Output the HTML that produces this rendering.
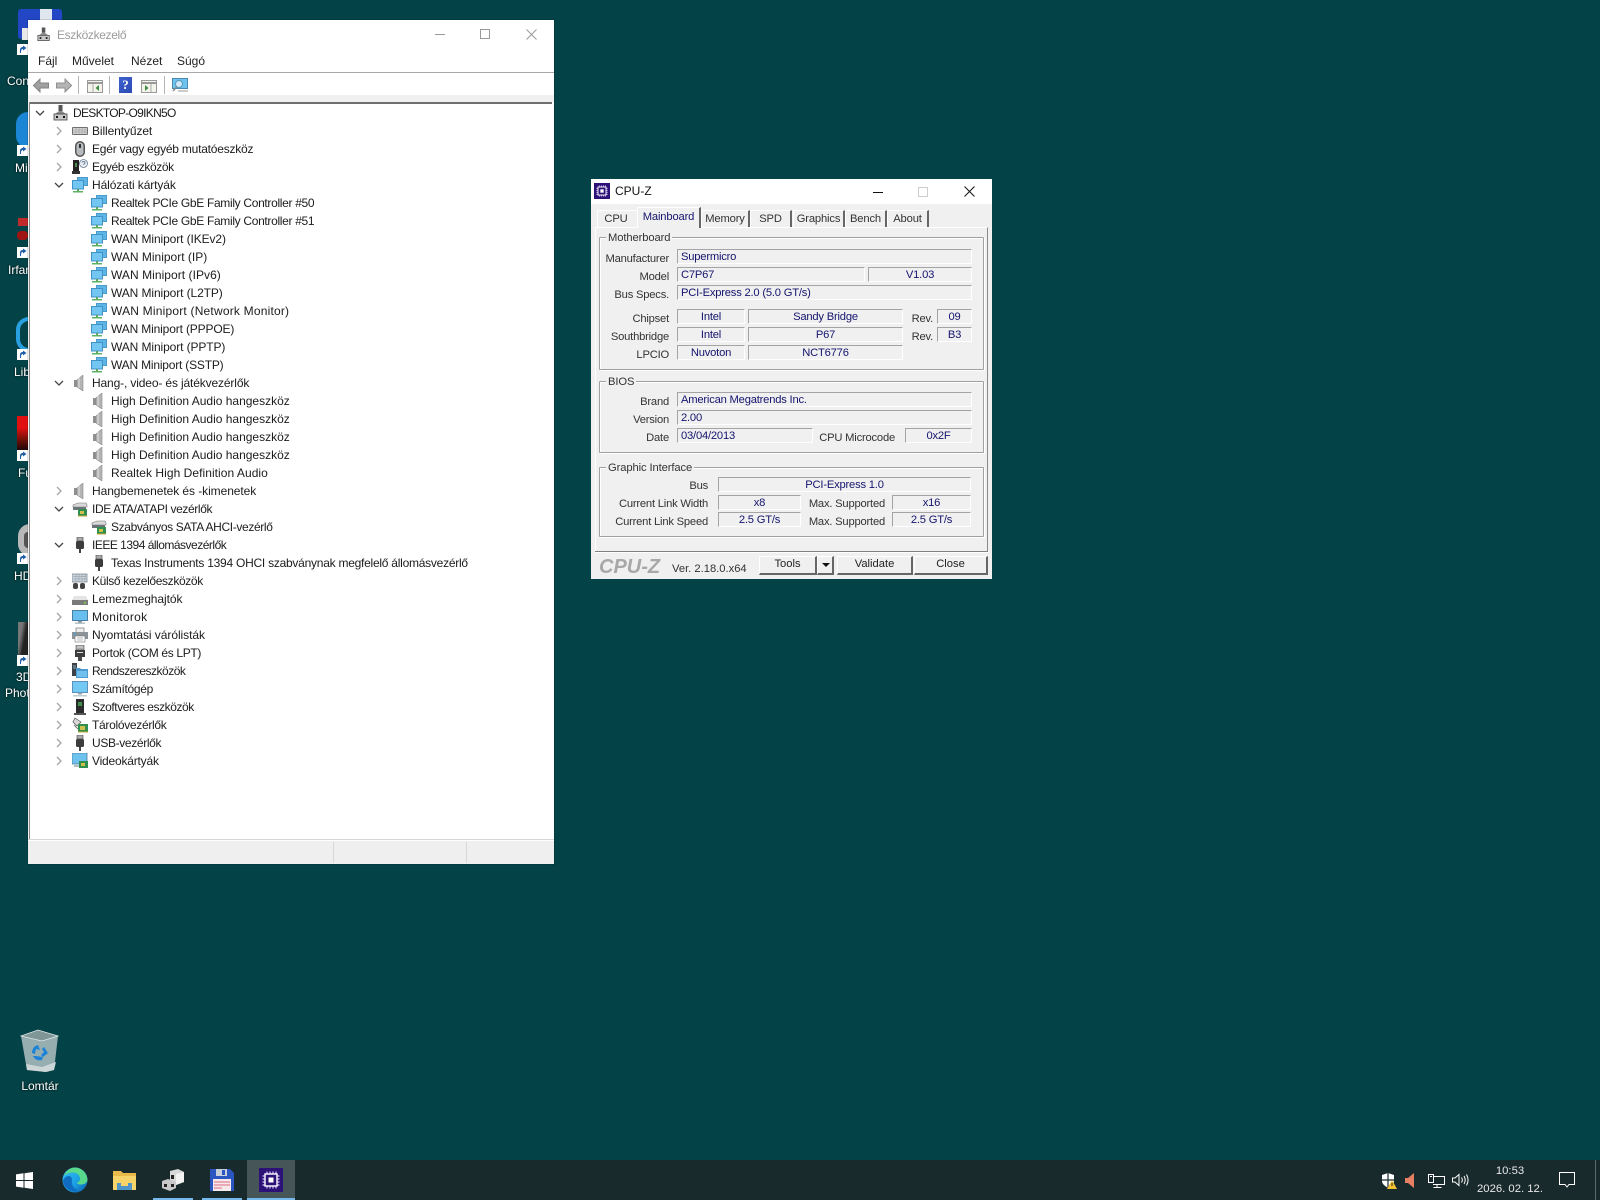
<!DOCTYPE html>
<html lang="hu"><head><meta charset="utf-8"><title>Desktop</title>
<style>
html,body{margin:0;padding:0}
body{position:relative;width:1600px;height:1200px;overflow:hidden;background:#034246;font-family:"Liberation Sans",sans-serif;font-size:12px;color:#222}
div,span,svg{position:absolute}
svg{display:block}
.t{white-space:nowrap}
.r{white-space:nowrap;height:18px;line-height:18px;font-size:12px;color:#1c1c1c}
.d{color:#fff;font-size:12px;white-space:nowrap;text-shadow:0 0 2px #000}
.f{background:#f0f0f0;border-top:1px solid #a4a4a4;border-left:1px solid #a4a4a4;border-bottom:1px solid #fff;border-right:1px solid #fff;color:#14146e;font-size:11.2px;letter-spacing:-.2px;line-height:15px;text-align:center;white-space:nowrap;box-sizing:border-box;height:15px}
.fl{text-align:left;padding-left:3px}
.l{white-space:nowrap;font-size:11.2px;letter-spacing:-.2px;line-height:16px;height:16px;color:#333;margin-top:1px}
.g{border:1px solid #a0a0a0;box-shadow:1px 1px 0 #fff,inset 1px 1px 0 #fff;box-sizing:border-box;left:599px;width:385px;border-radius:1px}
.gl{left:606px;background:#f0f0f0;padding:0 2px;font-size:11.2px;letter-spacing:-.1px;line-height:14px;height:14px;color:#333;white-space:nowrap;margin-top:1px}
.tab{box-sizing:border-box;top:210px;height:17px;border-top:1px solid #fff;border-left:1px solid #fff;border-right:2px solid #666;font-size:11.2px;letter-spacing:-.15px;line-height:17px;text-align:center;color:#333;background:#f0f0f0}
.b{box-sizing:border-box;height:19px;top:556px;background:#f0f0f0;border-top:1px solid #fff;border-left:1px solid #fff;border-right:2px solid #666;border-bottom:2px solid #666;font-size:11.2px;line-height:15px;text-align:center;color:#222}
</style></head><body>
<svg width="0" height="0" style="left:0;top:0">
<defs>
<symbol id="net" viewBox="0 0 16 16"><rect x="5.5" y=".5" width="10" height="8" fill="#5db5e6" stroke="#4a9acb"/><rect x=".5" y="3.500" width="11" height="8.500" fill="#74c6f2" stroke="#3f93c6"/><rect x="5" y="12" width="2" height="2" fill="#5aa85a"/><rect x="1" y="14" width="10" height="1.500" fill="#5cb064"/></symbol>
<symbol id="spk" viewBox="0 0 16 16"><path d="M2 5h3v7H2z" fill="#8f8f8f"/><path d="M5 5l6-5v16l-6-4z" fill="#b4b4b4" stroke="#8a8a8a" stroke-width=".6"/><path d="M7 3v10" stroke="#e2e2e2"/></symbol>
<symbol id="kbd" viewBox="0 0 16 16"><rect x="0" y="4" width="16" height="8" rx="1" fill="#6f6f6f"/><rect x="1" y="5" width="14" height="6" fill="#d4d4d4"/><path d="M1 7h14M1 9h14M4 5v6M7 5v6M10 5v6M13 5v6" stroke="#9b9b9b" stroke-width=".6"/></symbol>
<symbol id="mouse" viewBox="0 0 16 16"><rect x="3" y="0" width="10" height="16" rx="5" fill="#555"/><rect x="4.5" y="1.5" width="7" height="13" rx="3.5" fill="#b8bcc0"/><rect x="7" y="3" width="2" height="4" fill="#333"/></symbol>
<symbol id="unk" viewBox="0 0 16 16"><rect x="1" y="1" width="6" height="11" fill="#222"/><rect x="0" y="12" width="8" height="3" fill="#333"/><rect x="3" y="4" width="2" height="4" fill="#4d8a4d"/><circle cx="11.5" cy="4.5" r="4" fill="#e8eef4" stroke="#6a7f94" stroke-width=".8"/><path d="M10 3.500c.5-1.500 3-1.200 3 .3 0 1-1.400 1-1.400 2" fill="none" stroke="#6a7f94"/></symbol>
<symbol id="dev" viewBox="0 0 16 16"><rect x="5.500" y="0" width="4" height="6" fill="#555"/><path d="M6 6h3l4 3H2z" fill="#8a8a8a"/><rect x="1" y="9" width="13" height="6" fill="#c8c8c8" stroke="#444" stroke-width=".8"/><rect x="3" y="11" width="2" height="2" fill="#111"/><rect x="10" y="11" width="2" height="2" fill="#111"/></symbol>
<symbol id="ide" viewBox="0 0 16 16"><path d="M1 4l5-2h8l1 2v2H1z" fill="#d8d8d8" stroke="#777" stroke-width=".6"/><rect x="1" y="6" width="13" height="3" fill="#6b7278"/><rect x="6" y="8" width="9" height="7" fill="#2f8f4f"/><rect x="8" y="10" width="4" height="3" fill="#d4c04a"/><path d="M6 15h9" stroke="#c9a93a"/></symbol>
<symbol id="usb" viewBox="0 0 16 16"><rect x="5" y="0" width="6" height="4" fill="#a8a8a8" stroke="#555" stroke-width=".7"/><rect x="4" y="4" width="8" height="8" rx="1.500" fill="#3c3c3c"/><rect x="7" y="12" width="2" height="4" fill="#444"/></symbol>
<symbol id="ext" viewBox="0 0 16 16"><rect x="0" y="1" width="15" height="8" fill="#cdd5dc" stroke="#6e7b86" stroke-width=".7"/><path d="M1 3.500h13M1 6h13M4 1v8M7 1v8M10 1v8M13 1v8" stroke="#8a97a2" stroke-width=".5"/><rect x="1" y="10" width="5" height="6" rx="2" fill="#444"/><rect x="8" y="10" width="5" height="6" rx="2" fill="#444"/></symbol>
<symbol id="disk" viewBox="0 0 16 16"><path d="M2 5h12l2 4H0z" fill="#e4e4e4"/><rect x="0" y="9" width="16" height="5" fill="#7a7a7a"/><rect x="12" y="11" width="2" height="1.500" fill="#7fd34a"/></symbol>
<symbol id="mon" viewBox="0 0 16 16"><rect x=".5" y="1.500" width="15" height="10" fill="#66bfee" stroke="#4a7f9f"/><rect x="6" y="12" width="4" height="1.500" fill="#8a99a4"/><rect x="3" y="13.500" width="10" height="1.500" fill="#b8c2c9"/></symbol>
<symbol id="prn" viewBox="0 0 16 16"><rect x="4" y="1" width="8" height="5" fill="#eee" stroke="#666" stroke-width=".6"/><rect x="0" y="5" width="16" height="7" fill="#8c949a"/><rect x="2" y="6" width="2" height="1.500" fill="#3aa2d8"/><rect x="3" y="9" width="10" height="6" fill="#fff" stroke="#777" stroke-width=".6"/><path d="M5 11h6M5 13h6" stroke="#777" stroke-width=".6"/></symbol>
<symbol id="port" viewBox="0 0 16 16"><rect x="4" y="0" width="8" height="5" fill="#a9a9a9" stroke="#555" stroke-width=".6"/><rect x="3" y="5" width="10" height="7" fill="#3d3d3d"/><path d="M5 2h6M5 7.500h6" stroke="#ddd"/><rect x="6" y="12" width="4" height="4" fill="#4a4a4a"/></symbol>
<symbol id="sys" viewBox="0 0 16 16"><rect x="0" y="0" width="5" height="13" fill="#3c4248"/><path d="M1 3h3M1 5h3" stroke="#9fd0ea" stroke-width=".7"/><path d="M4 5h4l1 1h7v9H4z" fill="#4d9bd0"/><rect x="5" y="8" width="10" height="6" fill="#72c0ed"/></symbol>
<symbol id="pc" viewBox="0 0 16 16"><rect x=".5" y=".5" width="15" height="11" fill="#74c8f4" stroke="#5a93b3"/><rect x="6" y="12" width="4" height="1.500" fill="#98a4ac"/><rect x="1" y="14" width="14" height="1.500" fill="#c3ccd2"/></symbol>
<symbol id="sw" viewBox="0 0 16 16"><rect x="4" y="0" width="8" height="14" fill="#2b2b2b"/><rect x="6" y="3" width="4" height="4" fill="#3f8d4d"/><rect x="2" y="14" width="12" height="2" fill="#555"/></symbol>
<symbol id="sto" viewBox="0 0 16 16"><path d="M3 1l6 4-4 4-4-4z" fill="#d8d8d8" stroke="#555" stroke-width=".7"/><path d="M2 8l4 4" stroke="#777"/><rect x="6" y="7" width="10" height="8" fill="#2f8f4f"/><rect x="8" y="9" width="5" height="4" fill="#cfc04f"/><path d="M6 15h10" stroke="#c9a93a"/></symbol>
<symbol id="vid" viewBox="0 0 16 16"><rect x="0" y="0" width="15" height="11" fill="#6dc2ee" stroke="#4a7f9f" stroke-width=".8"/><rect x="7" y="8" width="9" height="7" fill="#2f8f4f"/><rect x="9" y="10" width="4" height="3" fill="#d0c04a"/><rect x="2" y="12" width="5" height="2" fill="#b5bfc6"/></symbol>
<symbol id="arrow" viewBox="0 0 11 11"><rect width="11" height="11" fill="#fff"/><path d="M3 9V6c0-2 1-3 3-3V1.500L9.500 4 6 6.500V5C4.500 5 4 6 4 9z" fill="#1f5ea8"/></symbol>
<symbol id="cz" viewBox="0 0 24 24"><rect width="24" height="24" fill="#2c1276"/><rect x="6" y="6" width="12" height="12" fill="none" stroke="#fff" stroke-width="1.400"/><rect x="9.500" y="9.500" width="5" height="5" fill="#fff"/><path d="M8 3.500v2M11 3.500v2M14 3.500v2M17 3.500v2M8 18.500v2M11 18.500v2M14 18.500v2M17 18.500v2M3.500 8h2M3.500 11h2M3.500 14h2M3.500 17h2M18.500 8h2M18.500 11h2M18.500 14h2M18.500 17h2" stroke="#d6c8ff" stroke-width="1.200"/></symbol>
</defs></svg>

<!-- desktop icons -->
<div style="left:18px;top:9px;width:44px;height:30px;background:#2246c4;border-radius:3px"></div>
<div style="left:40px;top:9px;width:12px;height:12px;background:#dfe6ee"></div>
<div style="left:22px;top:28px;width:6px;height:12px;background:#e8e8e8"></div>
<svg style="left:17px;top:44px" width="11" height="11"><use href="#arrow"/></svg>
<span class="d" style="left:7px;top:74px">Con</span>
<div style="left:16px;top:112px;width:24px;height:36px;border-radius:18px;background:#1b86d6"></div>
<svg style="left:17px;top:145px" width="11" height="11"><use href="#arrow"/></svg>
<span class="d" style="left:15px;top:161px">Mi</span>
<div style="left:18px;top:218px;width:10px;height:8px;background:#c02a2a"></div>
<div style="left:17px;top:231px;width:11px;height:9px;background:#a01414;border-radius:4px"></div>
<svg style="left:17px;top:247px" width="11" height="11"><use href="#arrow"/></svg>
<span class="d" style="left:8px;top:263px">Irfan</span>
<div style="left:16px;top:317px;width:26px;height:35px;border-radius:18px;border:4px solid #29a0e0;box-sizing:border-box;background:#034246"></div>
<svg style="left:17px;top:349px" width="11" height="11"><use href="#arrow"/></svg>
<span class="d" style="left:14px;top:365px">Lib</span>
<div style="left:17px;top:416px;width:11px;height:34px;background:linear-gradient(#e01010,#e01010 35%,#701008 70%,#200808)"></div>
<svg style="left:17px;top:450px" width="11" height="11"><use href="#arrow"/></svg>
<span class="d" style="left:18px;top:466px">Fu</span>
<div style="left:18px;top:524px;width:24px;height:32px;border-radius:16px;background:#b8b8b8"></div>
<div style="left:24px;top:532px;width:8px;height:16px;background:#555;border-radius:4px"></div>
<svg style="left:17px;top:553px" width="11" height="11"><use href="#arrow"/></svg>
<span class="d" style="left:14px;top:569px">HD</span>
<div style="left:18px;top:622px;width:10px;height:33px;background:linear-gradient(100deg,#777 30%,#222 60%)"></div>
<svg style="left:17px;top:655px" width="11" height="11"><use href="#arrow"/></svg>
<span class="d" style="left:16px;top:670px">3D</span>
<span class="d" style="left:5px;top:686px">Phot</span>

<!-- recycle bin -->
<svg style="left:20px;top:1029px" width="40" height="44" viewBox="0 0 40 44"><path d="M1 7L18 1l20 6-4 34-8 2-19-2z" fill="#97aeb0"/><path d="M1 7L18 1l20 6-16 5z" fill="#7f9698" stroke="#dfe8e8" stroke-width=".8"/><path d="M6 35l16 3 14-5-2 8-8 2-19-2z" fill="#ccd6d6"/><path d="M18 16c-4 1-6 4-6 8l3 1 1-5 4 1z M24 18l4 6-5 4-2-2 3-3-2-3z M13 27c2 4 6 5 9 4l1-3-7-1z" fill="#1b82d8"/></svg>
<span class="d" style="left:21px;top:1079px;width:38px;text-align:center;font-size:12px">Lomtár</span>

<!-- Device Manager -->
<div style="left:28px;top:20px;width:526px;height:844px;background:#fff;box-shadow:0 0 0 1px rgba(0,0,0,.12)"></div>
<svg style="left:37px;top:27px" width="14" height="15"><use href="#dev"/></svg>
<span class="t" style="left:57px;top:28px;color:#9a9a9a;font-size:12px;letter-spacing:-.35px;line-height:14px">Eszközkezelő</span>
<div style="left:435px;top:34px;width:10px;height:1px;background:#999"></div>
<div style="left:480px;top:29px;width:10px;height:10px;border:1px solid #999;box-sizing:border-box"></div>
<svg style="left:526px;top:29px" width="11" height="11"><path d="M.5.500l10 10M10.500.500l-10 10" stroke="#999" fill="none"/></svg>
<span class="t" style="left:38px;top:54px;font-size:12px;line-height:14px;color:#222">Fájl</span>
<span class="t" style="left:72px;top:54px;font-size:12px;line-height:14px;color:#222">Művelet</span>
<span class="t" style="left:131px;top:54px;font-size:12px;line-height:14px;color:#222">Nézet</span>
<span class="t" style="left:177px;top:54px;font-size:12px;line-height:14px;color:#222">Súgó</span>
<div style="left:28px;top:72px;width:526px;height:1px;background:#a8a8a8"></div>
<svg style="left:33px;top:78px" width="16" height="15"><path d="M.5 7.500L7 1v4h8.500v5H7v4z" fill="#a0a0a0" stroke="#858585"/></svg>
<svg style="left:56px;top:78px" width="16" height="15"><path d="M15.500 7.500L9 1v4H.5v5H9v4z" fill="#b4b4b4" stroke="#909090"/></svg>
<div style="left:78px;top:76px;width:1px;height:18px;background:#b5b5b5"></div>
<svg style="left:87px;top:80px" width="16" height="13"><rect x=".5" y=".5" width="15" height="12" fill="#f4f4ec" stroke="#999"/><path d="M1 3h14" stroke="#999" stroke-width="2"/><path d="M6 4v8" stroke="#aaa"/><path d="M12 5v6L8.500 8z" fill="#3e8d3e"/></svg>
<div style="left:109px;top:76px;width:1px;height:18px;background:#b5b5b5"></div>
<div style="left:119px;top:77px;width:13px;height:16px;background:linear-gradient(135deg,#3f63cf,#2a48b4);color:#fff;font:bold 13px/16px 'Liberation Serif',serif;text-align:center">?</div>
<svg style="left:141px;top:80px" width="16" height="13"><rect x=".5" y=".5" width="15" height="12" fill="#f4f4ec" stroke="#999"/><path d="M1 3h14" stroke="#999" stroke-width="2"/><path d="M10 4v8" stroke="#aaa"/><path d="M4 5v6l3.500-3z" fill="#3e8d3e"/></svg>
<div style="left:164px;top:76px;width:1px;height:18px;background:#b5b5b5"></div>
<svg style="left:172px;top:78px" width="17" height="15"><rect x=".5" y=".5" width="15" height="10" fill="#6cc4ee" stroke="#4a8ab0"/><circle cx="7" cy="6" r="3.500" fill="#cfeaf8" stroke="#5b97b7"/><path d="M4.500 9L1 13" stroke="#888" stroke-width="1.500"/><path d="M6 13h10" stroke="#999"/></svg>
<div style="left:28px;top:95px;width:526px;height:7px;background:#f0f0f0"></div>
<div style="left:29px;top:102px;width:523px;height:2px;background:#6f6f6f"></div>
<div style="left:29px;top:102px;width:1px;height:737px;background:#8a8a8a"></div>
<div style="left:28px;top:102px;width:1px;height:738px;background:#f0f0f0"></div>
<div style="left:28px;top:839px;width:526px;height:1px;background:#d6d6d6"></div>
<div style="left:28px;top:841px;width:526px;height:23px;background:#efefef"></div>
<div style="left:333px;top:842px;width:1px;height:21px;background:#d8d8d8"></div>
<div style="left:466px;top:842px;width:1px;height:21px;background:#d8d8d8"></div>

<!-- tree chevrons -->
<svg style="left:0;top:100px" width="80" height="680"><g fill="none" stroke="#444" stroke-width="1.300"><path d="M36 11l4 4 4-4"/><path d="M55 83l4 4 4-4M55 281l4 4 4-4M55 407l4 4 4-4M55 443l4 4 4-4"/></g><g fill="none" stroke="#a6a6a6" stroke-width="1.300"><path d="M57 27l4 4-4 4M57 45l4 4-4 4M57 63l4 4-4 4M57 387l4 4-4 4M57 477l4 4-4 4M57 495l4 4-4 4M57 513l4 4-4 4M57 531l4 4-4 4M57 549l4 4-4 4M57 567l4 4-4 4M57 585l4 4-4 4M57 603l4 4-4 4M57 621l4 4-4 4M57 639l4 4-4 4M57 657l4 4-4 4"/></g></svg>

<!-- tree rows -->
<svg style="left:53px;top:105px" width="16" height="16"><use href="#dev"/></svg><span class="r" style="left:73px;top:104px;letter-spacing:-.7px">DESKTOP-O9IKN5O</span>
<svg style="left:72px;top:123px" width="16" height="16"><use href="#kbd"/></svg><span class="r" style="left:92px;top:122px;letter-spacing:-.1px">Billentyűzet</span>
<svg style="left:72px;top:141px" width="16" height="16"><use href="#mouse"/></svg><span class="r" style="left:92px;top:140px;letter-spacing:-.22px">Egér vagy egyéb mutatóeszköz</span>
<svg style="left:72px;top:159px" width="16" height="16"><use href="#unk"/></svg><span class="r" style="left:92px;top:158px;letter-spacing:-.4px">Egyéb eszközök</span>
<svg style="left:72px;top:177px" width="16" height="16"><use href="#net"/></svg><span class="r" style="left:92px;top:176px;letter-spacing:-.1px">Hálózati kártyák</span>
<svg style="left:91px;top:195px" width="16" height="16"><use href="#net"/></svg><span class="r" style="left:111px;top:194px;letter-spacing:-.32px">Realtek PCIe GbE Family Controller #50</span>
<svg style="left:91px;top:213px" width="16" height="16"><use href="#net"/></svg><span class="r" style="left:111px;top:212px;letter-spacing:-.32px">Realtek PCIe GbE Family Controller #51</span>
<svg style="left:91px;top:231px" width="16" height="16"><use href="#net"/></svg><span class="r" style="left:111px;top:230px;letter-spacing:-.1px">WAN Miniport (IKEv2)</span>
<svg style="left:91px;top:249px" width="16" height="16"><use href="#net"/></svg><span class="r" style="left:111px;top:248px">WAN Miniport (IP)</span>
<svg style="left:91px;top:267px" width="16" height="16"><use href="#net"/></svg><span class="r" style="left:111px;top:266px;letter-spacing:.05px">WAN Miniport (IPv6)</span>
<svg style="left:91px;top:285px" width="16" height="16"><use href="#net"/></svg><span class="r" style="left:111px;top:284px;letter-spacing:-.1px">WAN Miniport (L2TP)</span>
<svg style="left:91px;top:303px" width="16" height="16"><use href="#net"/></svg><span class="r" style="left:111px;top:302px;letter-spacing:.2px">WAN Miniport (Network Monitor)</span>
<svg style="left:91px;top:321px" width="16" height="16"><use href="#net"/></svg><span class="r" style="left:111px;top:320px;letter-spacing:-.15px">WAN Miniport (PPPOE)</span>
<svg style="left:91px;top:339px" width="16" height="16"><use href="#net"/></svg><span class="r" style="left:111px;top:338px;letter-spacing:-.1px">WAN Miniport (PPTP)</span>
<svg style="left:91px;top:357px" width="16" height="16"><use href="#net"/></svg><span class="r" style="left:111px;top:356px;letter-spacing:-.2px">WAN Miniport (SSTP)</span>
<svg style="left:72px;top:375px" width="16" height="16"><use href="#spk"/></svg><span class="r" style="left:92px;top:374px;letter-spacing:-.14px">Hang-, video- és játékvezérlők</span>
<svg style="left:91px;top:393px" width="16" height="16"><use href="#spk"/></svg><span class="r" style="left:111px;top:392px">High Definition Audio hangeszköz</span>
<svg style="left:91px;top:411px" width="16" height="16"><use href="#spk"/></svg><span class="r" style="left:111px;top:410px">High Definition Audio hangeszköz</span>
<svg style="left:91px;top:429px" width="16" height="16"><use href="#spk"/></svg><span class="r" style="left:111px;top:428px">High Definition Audio hangeszköz</span>
<svg style="left:91px;top:447px" width="16" height="16"><use href="#spk"/></svg><span class="r" style="left:111px;top:446px">High Definition Audio hangeszköz</span>
<svg style="left:91px;top:465px" width="16" height="16"><use href="#spk"/></svg><span class="r" style="left:111px;top:464px;letter-spacing:.05px">Realtek High Definition Audio</span>
<svg style="left:72px;top:483px" width="16" height="16"><use href="#spk"/></svg><span class="r" style="left:92px;top:482px;letter-spacing:-.07px">Hangbemenetek és -kimenetek</span>
<svg style="left:72px;top:501px" width="16" height="16"><use href="#ide"/></svg><span class="r" style="left:92px;top:500px;letter-spacing:-.38px">IDE ATA/ATAPI vezérlők</span>
<svg style="left:91px;top:519px" width="16" height="16"><use href="#ide"/></svg><span class="r" style="left:111px;top:518px;letter-spacing:-.36px">Szabványos SATA AHCI-vezérlő</span>
<svg style="left:72px;top:537px" width="16" height="16"><use href="#usb"/></svg><span class="r" style="left:92px;top:536px;letter-spacing:-.5px">IEEE 1394 állomásvezérlők</span>
<svg style="left:91px;top:555px" width="16" height="16"><use href="#usb"/></svg><span class="r" style="left:111px;top:554px;letter-spacing:-.25px">Texas Instruments 1394 OHCI szabványnak megfelelő állomásvezérlő</span>
<svg style="left:72px;top:573px" width="16" height="16"><use href="#ext"/></svg><span class="r" style="left:92px;top:572px;letter-spacing:-.36px">Külső kezelőeszközök</span>
<svg style="left:72px;top:591px" width="16" height="16"><use href="#disk"/></svg><span class="r" style="left:92px;top:590px;letter-spacing:-.07px">Lemezmeghajtók</span>
<svg style="left:72px;top:609px" width="16" height="16"><use href="#mon"/></svg><span class="r" style="left:92px;top:608px;letter-spacing:.3px">Monitorok</span>
<svg style="left:72px;top:627px" width="16" height="16"><use href="#prn"/></svg><span class="r" style="left:92px;top:626px;letter-spacing:-.05px">Nyomtatási várólisták</span>
<svg style="left:72px;top:645px" width="16" height="16"><use href="#port"/></svg><span class="r" style="left:92px;top:644px;letter-spacing:-.33px">Portok (COM és LPT)</span>
<svg style="left:72px;top:663px" width="16" height="16"><use href="#sys"/></svg><span class="r" style="left:92px;top:662px;letter-spacing:-.5px">Rendszereszközök</span>
<svg style="left:72px;top:681px" width="16" height="16"><use href="#pc"/></svg><span class="r" style="left:92px;top:680px;letter-spacing:-.3px">Számítógép</span>
<svg style="left:72px;top:699px" width="16" height="16"><use href="#sw"/></svg><span class="r" style="left:92px;top:698px;letter-spacing:-.43px">Szoftveres eszközök</span>
<svg style="left:72px;top:717px" width="16" height="16"><use href="#sto"/></svg><span class="r" style="left:92px;top:716px;letter-spacing:-.3px">Tárolóvezérlők</span>
<svg style="left:72px;top:735px" width="16" height="16"><use href="#usb"/></svg><span class="r" style="left:92px;top:734px;letter-spacing:-.35px">USB-vezérlők</span>
<svg style="left:72px;top:753px" width="16" height="16"><use href="#vid"/></svg><span class="r" style="left:92px;top:752px;letter-spacing:-.2px">Videokártyák</span>

<!-- CPU-Z window -->
<div style="left:591px;top:179px;width:401px;height:400px;background:#f0f0f0"></div>
<div style="left:591px;top:179px;width:401px;height:25px;background:#fff"></div>
<svg style="left:594px;top:183px" width="16" height="16"><use href="#cz"/></svg>
<span class="t" style="left:615px;top:183px;font-size:12px;line-height:16px;color:#111">CPU-Z</span>
<div style="left:873px;top:192px;width:10px;height:1px;background:#111"></div>
<div style="left:918px;top:187px;width:10px;height:10px;border:1px solid #ccc;box-sizing:border-box"></div>
<svg style="left:964px;top:186px" width="11" height="11"><path d="M.5.500l10 10M10.500.500l-10 10" stroke="#111" fill="none"/></svg>

<!-- tabs -->
<div style="left:595px;top:227px;width:393px;height:325px;box-sizing:border-box;border-top:1px solid #fff;border-left:1px solid #fff;border-right:1px solid #8a8a8a"></div>
<div class="tab" style="left:597px;width:40px;border-right:0;padding-right:3px">CPU</div>
<div class="tab" style="left:701px;width:49px">Memory</div>
<div class="tab" style="left:750px;width:42px">SPD</div>
<div class="tab" style="left:793px;width:52px">Graphics</div>
<div class="tab" style="left:845px;width:42px">Bench</div>
<div class="tab" style="left:887px;width:42px">About</div>
<div class="tab" style="left:637px;top:207px;height:21px;width:64px;color:#14146e;line-height:19px">Mainboard</div>

<!-- groups -->
<div class="g" style="top:237px;height:133px"></div><span class="gl" style="top:230px">Motherboard</span>
<div class="g" style="top:381px;height:72px"></div><span class="gl" style="top:374px">BIOS</span>
<div class="g" style="top:467px;height:70px"></div><span class="gl" style="top:460px">Graphic Interface</span>

<!-- motherboard -->
<span class="l" style="right:931px;top:250px">Manufacturer</span><div class="f fl" style="left:677px;top:249px;width:295px">Supermicro</div>
<span class="l" style="right:931px;top:268px">Model</span><div class="f fl" style="left:677px;top:267px;width:188px">C7P67</div><div class="f" style="left:868px;top:267px;width:104px">V1.03</div>
<span class="l" style="right:931px;top:286px">Bus Specs.</span><div class="f fl" style="left:677px;top:285px;width:295px">PCI-Express 2.0 (5.0 GT/s)</div>
<span class="l" style="right:931px;top:310px">Chipset</span><div class="f" style="left:677px;top:309px;width:68px">Intel</div><div class="f" style="left:748px;top:309px;width:155px">Sandy Bridge</div>
<span class="l" style="right:667px;top:310px">Rev.</span><div class="f" style="left:937px;top:309px;width:35px">09</div>
<span class="l" style="right:931px;top:328px">Southbridge</span><div class="f" style="left:677px;top:327px;width:68px">Intel</div><div class="f" style="left:748px;top:327px;width:155px">P67</div>
<span class="l" style="right:667px;top:328px">Rev.</span><div class="f" style="left:937px;top:327px;width:35px">B3</div>
<span class="l" style="right:931px;top:346px">LPCIO</span><div class="f" style="left:677px;top:345px;width:68px">Nuvoton</div><div class="f" style="left:748px;top:345px;width:155px">NCT6776</div>

<!-- bios -->
<span class="l" style="right:931px;top:393px">Brand</span><div class="f fl" style="left:677px;top:392px;width:295px">American Megatrends Inc.</div>
<span class="l" style="right:931px;top:411px">Version</span><div class="f fl" style="left:677px;top:410px;width:295px">2.00</div>
<span class="l" style="right:931px;top:429px">Date</span><div class="f fl" style="left:677px;top:428px;width:136px">03/04/2013</div>
<span class="l" style="right:705px;top:429px">CPU Microcode</span><div class="f" style="left:905px;top:428px;width:67px">0x2F</div>

<!-- graphic -->
<span class="l" style="right:892px;top:477px">Bus</span><div class="f" style="left:718px;top:477px;width:253px">PCI-Express 1.0</div>
<span class="l" style="right:892px;top:495px">Current Link Width</span><div class="f" style="left:718px;top:495px;width:83px">x8</div>
<span class="l" style="right:715px;top:495px">Max. Supported</span><div class="f" style="left:892px;top:495px;width:79px">x16</div>
<span class="l" style="right:892px;top:513px">Current Link Speed</span><div class="f" style="left:718px;top:512px;width:83px">2.5 GT/s</div>
<span class="l" style="right:715px;top:513px">Max. Supported</span><div class="f" style="left:892px;top:512px;width:79px">2.5 GT/s</div>

<!-- footer -->
<div style="left:595px;top:551px;width:393px;height:1px;background:#808080"></div>
<div style="left:595px;top:552px;width:393px;height:1px;background:#fff"></div>
<span class="t" style="left:599px;top:554px;font:italic bold 20px/26px 'Liberation Sans',sans-serif;color:#a8a8a8">CPU-Z</span>
<span class="t" style="left:672px;top:561px;font-size:11.200px;line-height:16px;color:#333">Ver. 2.18.0.x64</span>
<div class="b" style="left:759px;width:58px">Tools</div>
<div class="b" style="left:817px;width:17px"></div>
<div style="left:822px;top:563px;width:0;height:0;border-left:4px solid transparent;border-right:4px solid transparent;border-top:4px solid #111"></div>
<div class="b" style="left:837px;width:76px">Validate</div>
<div class="b" style="left:914px;width:74px">Close</div>

<!-- taskbar -->
<div style="left:0;top:1160px;width:1600px;height:40px;background:#192a2d"></div>
<div style="left:247px;top:1160px;width:48px;height:40px;background:#465557"></div>
<div style="left:153px;top:1198px;width:40px;height:2px;background:#76b9ed"></div>
<div style="left:202px;top:1198px;width:40px;height:2px;background:#76b9ed"></div>
<div style="left:247px;top:1198px;width:48px;height:2px;background:#76b9ed"></div>
<svg style="left:16px;top:1172px" width="17" height="17"><path d="M0 2.400L7.500 1.300V8H0zM8.500 1.200L17 0v8H8.500zM0 9h7.500v6.700L0 14.600zM8.500 9H17v8l-8.500-1.200z" fill="#fff"/></svg>
<svg style="left:62px;top:1167px" width="26" height="26" viewBox="0 0 26 26"><defs><linearGradient id="eg" x1="0" y1="0" x2="1" y2="1"><stop offset="0" stop-color="#35c1f1"/><stop offset=".6" stop-color="#1b9de2"/><stop offset="1" stop-color="#0c59a4"/></linearGradient></defs><circle cx="13" cy="13" r="12.500" fill="url(#eg)"/><path d="M2 9C4 3 9 .5 13 .5c6 0 12 5 12.500 12 0 3-3 5-6.500 5-2.500 0-4-1-4-2 1 0 3-1 3-4 0-3-3-6-7-6S4 7 2 9z" fill="#58d98c"/><path d="M10 13c-1 5 2 9 7 11-7 2-15-2-16-10 1-3 3-5 6-5 2 0 3 2 3 4z" fill="#0f6cc0"/></svg>
<svg style="left:113px;top:1170px" width="23" height="20" viewBox="0 0 23 20"><path d="M0 1h8l2 2h13v17H0z" fill="#e9b949"/><path d="M0 6h23v14H0z" fill="#f7d469"/><rect x="4" y="13" width="15" height="7" fill="#4f95c9"/><rect x="8" y="13" width="7" height="3" fill="#f7d469"/></svg>
<svg style="left:162px;top:1169px" width="22" height="22" viewBox="0 0 22 22"><path d="M8 2l8-2 6 3v10l-8 3-6-3z" fill="#d8d8d8"/><path d="M14 5l8-2v10l-8 3z" fill="#f2f2f2"/><rect x="9" y="6" width="3" height="4" fill="#222"/><path d="M0 12l6-2 8 3v6l-6 3-8-3z" fill="#c8c8c8"/><rect x="2" y="15" width="3" height="3" fill="#222"/><rect x="9" y="15" width="3" height="3" fill="#222"/></svg>
<svg style="left:210px;top:1168px" width="24" height="24" viewBox="0 0 24 24"><path d="M0 1h20l4 4v18H0z" fill="#2b55c0"/><rect x="6" y="1" width="11" height="7" fill="#c6cedb"/><rect x="12" y="2" width="3" height="5" fill="#2b55c0"/><rect x="3" y="11" width="18" height="12" fill="#f6e9ec"/><path d="M4 14h16M4 17h16M4 20h8" stroke="#dc6a7e"/></svg>
<svg style="left:259px;top:1168px" width="24" height="24"><use href="#cz"/></svg>
<!-- tray -->
<svg style="left:1381px;top:1172px" width="16" height="17" viewBox="0 0 16 17"><path d="M7 1l6 2v6c0 3-3 5-6 7-3-2-6-4-6-7V3z" fill="#fff"/><path d="M7 1v15M1 8h12" stroke="#192a2d" stroke-width="1.200"/><path d="M11 8l5 9H6z" fill="#f4c430"/><rect x="10.500" y="11" width="1" height="3" fill="#222"/></svg>
<svg style="left:1404px;top:1173px" width="12" height="15" viewBox="0 0 12 15"><path d="M1 5h3l6-5v15l-6-5H1z" fill="#e58063"/></svg>
<svg style="left:1428px;top:1173px" width="17" height="15" fill="none" stroke="#fff"><path d="M.5 1.500h5v8h-5zM5.500 3.500h11v8H5M9 11.500v2.500M5.500 14.500h8M2 3.500h2"/></svg>
<svg style="left:1452px;top:1173px" width="17" height="14" fill="none" stroke="#fff"><path d="M.5 5h2.500L7 1.500v11L3 9H.5zM9.500 4.500c1 1.500 1 3.500 0 5M12 3c1.500 2.500 1.500 5.500 0 8M14.500 1.500c2 3.500 2 7.500 0 11"/></svg>
<span class="t" style="left:1470px;width:80px;text-align:center;top:1164px;font-size:11.300px;line-height:14px;color:#e8e8e8">10:53</span>
<span class="t" style="left:1470px;width:80px;text-align:center;top:1182px;font-size:11.300px;line-height:14px;color:#e8e8e8">2026. 02. 12.</span>
<svg style="left:1559px;top:1172px" width="17" height="17" fill="none" stroke="#fff"><path d="M.5.500h15v12H10l-2 2.500-2-2.500H.5z"/></svg>
<div style="left:1595px;top:1160px;width:1px;height:40px;background:#5c6b6d"></div>
</body></html>
